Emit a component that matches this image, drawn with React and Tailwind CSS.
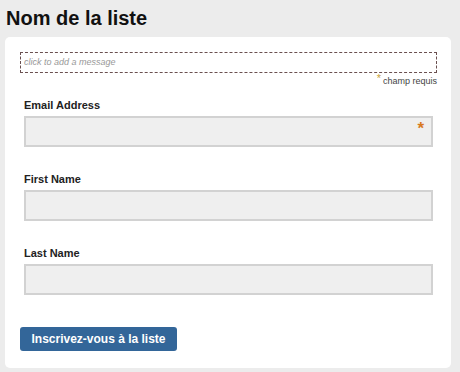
import React from 'react';

function Field({ label, required, className = '' }) {
  return (
    <div className={className}>
      <label className="block pl-[19px] text-[11px] font-bold leading-[14px] text-[#222]">{label}</label>
      <div className="relative ml-[19px] mt-[4px] h-[31px] w-[409px] border-2 border-[#d2d2d2] bg-[#efefef]">
        {required && (
          <span className="absolute right-[7px] top-[2px] text-[17px] font-bold leading-none text-[#d87a1f]">*</span>
        )}
      </div>
    </div>
  );
}

export default function App() {
  return (
    <div className="min-h-[372px] bg-[#ececec] pb-[5px] font-['Liberation_Sans',Arial,sans-serif]">
      <h1 className="px-[6px] pt-[6px] text-[20px] font-bold leading-[24px] text-[#111]">Nom de la liste</h1>
      <div className="ml-[5px] mt-[7px] w-[446px] rounded-[5px] bg-white pb-[17px] pt-[15px]">
        <div className="ml-[15px] h-[21px] w-[417px] border border-dashed border-[#6a5050] px-[3px] text-[9px] italic leading-[19px] text-[#999]">
          click to add a message
        </div>
        <div className="mr-[14px] mt-[1px] text-right text-[9px] leading-[12px] text-[#444]">
          <span className="relative top-[-2px] mr-[2px] text-[11px] text-[#c9a23a]">*</span>champ requis
        </div>
        <Field label="Email Address" required className="mt-[11px]" />
        <Field label="First Name" className="mt-[25px]" />
        <Field label="Last Name" className="mt-[25px]" />
        <button className="ml-[15px] mt-[32px] h-[24px] w-[157px] rounded-[3px] bg-[#336699] text-[12px] font-bold text-white">
          Inscrivez-vous à la liste
        </button>
      </div>
    </div>
  );
}
